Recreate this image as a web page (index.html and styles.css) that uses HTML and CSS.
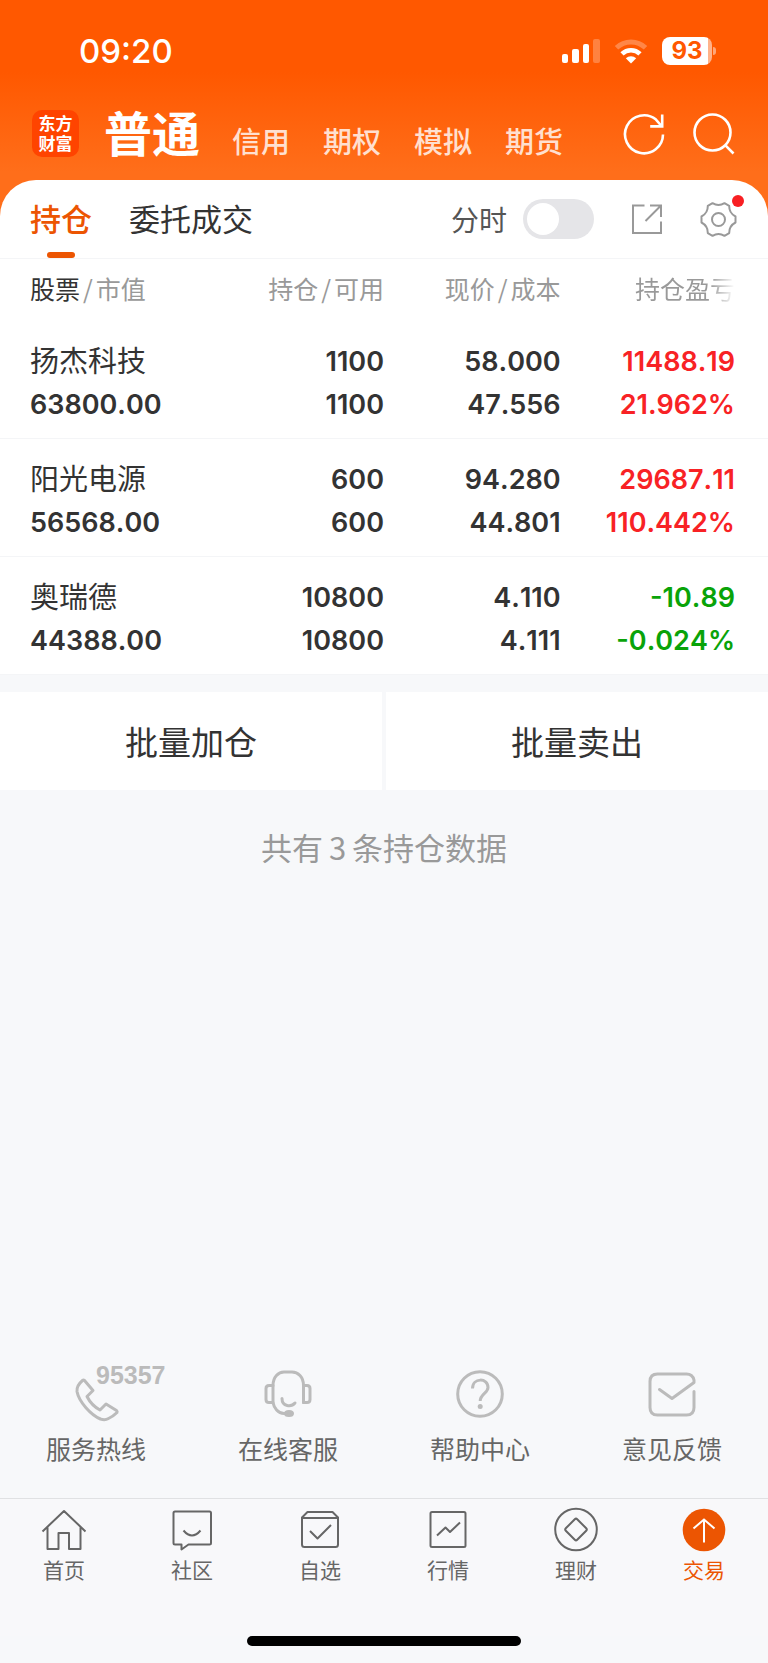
FILE: index.html
```html
<!DOCTYPE html>
<html lang="zh-CN">
<head>
<meta charset="utf-8">
<meta name="viewport" content="width=device-width, initial-scale=1">
<title>交易 - 持仓</title>
<link rel="stylesheet" href="styles.css">
</head>
<body>
<header class="top">
  <div class="status">
    <span class="clock">09:20</span>
    <div class="status-icons">
      <svg class="signal" width="38" height="24" viewBox="0 0 38 24" fill="#fff" aria-hidden="true">
        <rect x="0" y="15" width="6" height="9" rx="2"/>
        <rect x="10" y="10" width="7" height="14" rx="2"/>
        <rect x="21" y="5" width="6" height="19" rx="2"/>
        <rect x="31" y="0" width="7" height="24" rx="2" opacity=".25"/>
      </svg>
      <svg class="wifi" width="34" height="25" viewBox="0 0 34 25" aria-hidden="true">
        <path d="M2.5 8.8a21 21 0 0 1 29 0" fill="none" stroke="#fff" stroke-opacity=".28" stroke-width="5"/>
        <path d="M8 14.8a13 13 0 0 1 18 0" fill="none" stroke="#fff" stroke-width="4.6"/>
        <path d="M17 24.6l-5.2-5.3a7.6 7.6 0 0 1 10.4 0z" fill="#fff"/>
      </svg>
      <div class="battery">93</div>
    </div>
  </div>
  <nav class="accounts">
    <span class="logo">东方<br>财富</span>
    <a class="account current" href="#putong">普通</a>
    <a class="account" href="#xinyong">信用</a>
    <a class="account" href="#qiquan">期权</a>
    <a class="account" href="#moni">模拟</a>
    <a class="account" href="#qihuo">期货</a>
    <div class="actions">
      <button class="icon-btn" type="button" aria-label="刷新">
        <svg width="42" height="42" viewBox="0 0 42 42" fill="none" stroke="#fff" stroke-width="2.6">
          <path d="M40 21.5A19 19 0 1 1 33 6.6L38.5 13"/>
          <path d="M39.200 1.500V13.400H27.200"/>
        </svg>
      </button>
      <button class="icon-btn" type="button" aria-label="搜索">
        <svg width="42" height="42" viewBox="0 0 42 42" fill="none" stroke="#fff" stroke-width="2.600">
          <circle cx="19.500" cy="19.500" r="18"/>
          <path d="M32.200 32.200L40.500 40.500"/>
        </svg>
      </button>
    </div>
  </nav>
</header>

<main class="sheet">
  <div class="tabs">
    <a class="tab active" href="#chicang">持仓</a>
    <a class="tab" href="#weituo">委托成交</a>
    <div class="tools">
      <label class="switch">分时<input type="checkbox" role="switch"></label>
      <button class="icon-btn" type="button" aria-label="分享">
        <svg width="30" height="30" viewBox="0 0 30 30" fill="none" stroke="#999" stroke-width="2">
          <path d="M12.500 1.500H1V29H29V17.500"/>
          <path d="M18 1.500H29V13M28.500 2L13.500 17"/>
        </svg>
      </button>
      <button class="icon-btn gear" type="button" aria-label="设置">
        <svg width="37" height="37" viewBox="0 0 37 37" fill="none" stroke="#999" stroke-width="2" stroke-linejoin="round">
          <path d="M12.500 2.200Q18.500 6 24.500 2.200L29.200 4.900Q29 12 35.500 15.500V21.500Q29 25 29.200 32.100L24.500 34.800Q18.500 31 12.500 34.800L7.800 32.100Q8 25 1.500 21.500V15.500Q8 12 7.800 4.900Z"/>
          <circle cx="18.500" cy="18.500" r="6.500"/>
        </svg>
      </button>
    </div>
  </div>

  <table class="holdings">
    <thead>
      <tr>
        <th scope="col"><b>股票</b><i>/</i>市值</th>
        <th scope="col">持仓<i>/</i>可用</th>
        <th scope="col">现价<i>/</i>成本</th>
        <th scope="col"><span class="fade">持仓盈亏</span></th>
      </tr>
    </thead>
    <tbody>
      <tr>
        <td><span class="name">扬杰科技</span><span>63800.00</span></td>
        <td><span>1100</span><span>1100</span></td>
        <td><span>58.000</span><span>47.556</span></td>
        <td class="up"><span>11488.19</span><span>21.962%</span></td>
      </tr>
      <tr>
        <td><span class="name">阳光电源</span><span>56568.00</span></td>
        <td><span>600</span><span>600</span></td>
        <td><span>94.280</span><span>44.801</span></td>
        <td class="up"><span>29687.11</span><span>110.442%</span></td>
      </tr>
      <tr>
        <td><span class="name">奥瑞德</span><span>44388.00</span></td>
        <td><span>10800</span><span>10800</span></td>
        <td><span>4.110</span><span>4.111</span></td>
        <td class="down"><span>-10.89</span><span>-0.024%</span></td>
      </tr>
    </tbody>
  </table>
</main>

<div class="batch">
  <button type="button">批量加仓</button>
  <button type="button">批量卖出</button>
</div>
<p class="summary">共有<span class="count">3</span>条持仓数据</p>

<section class="services">
  <a class="service" href="#hotline">
    <span class="service-icon">
      <svg width="48" height="48" viewBox="0 0 48 48" fill="none" stroke="#bbb" stroke-width="3" stroke-linejoin="round">
        <path d="M10.500 10.500C7 13.500 4.500 17 5 21.500C7 32 19 45 28.500 49Q33 50.500 36.500 48.500Q41 46.500 45 42.500Q45.500 41.500 44.500 40.500L34 34L28 40Q19.500 35.500 15 26.500L21 20.500L12.500 10.500Q11.500 9.700 10.500 10.500Z"/>
      </svg>
      <span class="hotline">95357</span>
    </span>
    服务热线
  </a>
  <a class="service" href="#online">
    <span class="service-icon">
      <svg width="48" height="48" viewBox="0 0 48 48" fill="none" stroke="#bbb" stroke-width="3" stroke-linecap="round" stroke-linejoin="round">
        <path d="M9 15.500C9 7 14.500 2 20 2H28C34 2 39.500 7 39.500 15.500V32.500M9 15.500V32.500C10 38 14 43.500 20 43.500H23"/>
        <path d="M9 15.500H5Q2 15.500 2 18.500V29.500Q2 32.500 5 32.500H9M39.500 15.500H43Q46 15.500 46 18.500V29.500Q46 32.500 43 32.500H39.500"/>
        <path d="M18 28.500C18 37 27.500 37 31 33"/>
        <ellipse cx="25" cy="43.500" rx="3.500" ry="2" fill="#bbb"/>
      </svg>
    </span>
    在线客服
  </a>
  <a class="service" href="#help">
    <span class="service-icon">
      <svg width="48" height="48" viewBox="0 0 48 48" fill="none" stroke="#bbb" stroke-width="3">
        <circle cx="24" cy="24" r="22.300"/>
        <path d="M16.500 18.500C16.500 7.500 32 7.500 32 17.500C32 23 24.200 24 24.200 31"/>
        <circle cx="24.200" cy="36.500" r="2.500" fill="#bbb" stroke="none"/>
      </svg>
    </span>
    帮助中心
  </a>
  <a class="service" href="#feedback">
    <span class="service-icon">
      <svg width="48" height="48" viewBox="0 0 48 48" fill="none" stroke="#bbb" stroke-width="3" stroke-linecap="round" stroke-linejoin="round">
        <path d="M46 21.500V37.500Q46 45 38.500 45H9.500Q2 45 2 37.500V11.500Q2 4 9.500 4H38.500Q44.500 4 46 10V12.500L24 28.500L11.500 19.500"/>
      </svg>
    </span>
    意见反馈
  </a>
</section>

<nav class="tabbar">
  <a class="item" href="#home">
    <svg width="44" height="44" viewBox="0 0 44 44" fill="none" stroke="#666" stroke-width="2" stroke-linejoin="round">
      <path d="M.5 23.500L22 3L43.500 23.500M5.500 19.500V41H16.500V25H27V41H38.500V19.500"/>
    </svg>首页</a>
  <a class="item" href="#community">
    <svg width="44" height="44" viewBox="0 0 44 44" fill="none" stroke="#666" stroke-width="2" stroke-linejoin="round">
      <path d="M5 3.500H39.500Q41 3.500 41 5V35Q41 36.500 39.500 36.500H18.500L11.500 41.500V36.500H5Q3.500 36.500 3.500 35V5Q3.500 3.500 5 3.500Z"/>
      <path d="M13.500 22.500Q22 32.500 30.500 22.500"/>
    </svg>社区</a>
  <a class="item" href="#watchlist">
    <svg width="44" height="44" viewBox="0 0 44 44" fill="none" stroke="#666" stroke-width="2" stroke-linejoin="round">
      <path d="M4 9.500L9.500 4H34.500L40 9.500V36.500Q40 39 37.500 39H6.500Q4 39 4 36.500ZM4 10H40M12 23L19.500 30.500L33 17"/>
    </svg>自选</a>
  <a class="item" href="#market">
    <svg width="44" height="44" viewBox="0 0 44 44" fill="none" stroke="#666" stroke-width="2" stroke-linejoin="round">
      <rect x="4.500" y="4" width="35" height="35" rx="1.500"/>
      <path d="M11 27.500L19.500 19.500L24 24L34 14.500"/>
    </svg>行情</a>
  <a class="item" href="#wealth">
    <svg width="44" height="44" viewBox="0 0 44 44" fill="none" stroke="#666" stroke-width="2" stroke-linejoin="round">
      <circle cx="22" cy="21.500" r="20.800"/>
      <path d="M20.800 11.200Q22 10 23.200 11.200L32.200 20.300Q33.400 21.500 32.200 22.700L23.200 31.800Q22 33 20.800 31.800L11.800 22.700Q10.600 21.500 11.800 20.300Z"/>
    </svg>理财</a>
  <a class="item selected" href="#trade">
    <svg width="44" height="44" viewBox="0 0 44 44" fill="none" stroke="#fff" stroke-width="2">
      <circle cx="22" cy="22" r="21.300" fill="#ec5502" stroke="none"/>
      <path d="M22 34.500V12M11.500 20.500L22 11.500L32.500 20.500"/>
    </svg>交易</a>
</nav>
<div class="home-indicator"></div>
</body>
</html>
```
FILE: styles.css
```css
* {
  box-sizing: border-box;
}

body {
  margin: 0;
  min-height: 100vh;
  display: flex;
  flex-direction: column;
  background: #f7f8fa;
  color: #333;
  font-family: "Noto Sans CJK SC", sans-serif;
}

a {
  color: inherit;
  text-decoration: none;
}

button {
  border: 0;
  background: none;
  color: inherit;
  font-family: inherit;
}

svg {
  display: block;
  overflow: visible;
}

/* Orange header */
.top {
  padding-bottom: 36px;
  background: linear-gradient(#ff5800 0, #ff5800 72px, #ff6e1a 172px);
  color: #fff;
}

.status {
  height: 102px;
  padding: 0 56px 0 79px;
  display: flex;
  align-items: center;
  justify-content: space-between;
}

.clock {
  font: 500 33px/40px Inter, sans-serif;
}

.status-icons {
  display: flex;
  align-items: center;
}

.wifi {
  margin-left: 14px;
}

.battery {
  position: relative;
  width: 50px;
  height: 28px;
  margin-left: 14px;
  border-radius: 8px;
  background: linear-gradient(90deg, #fff 46px, #ffb28a 46px);
  color: #ff5800;
  font: 700 24px/28px Inter, sans-serif;
  text-align: center;
}

.battery::after {
  content: "";
  position: absolute;
  left: 51px;
  top: 10px;
  width: 3px;
  height: 8px;
  border-radius: 0 3px 3px 0;
  background: #ffa577;
}

.accounts {
  height: 78px;
  padding: 0 33px 23px 32px;
  display: flex;
  align-items: flex-end;
}

.logo {
  width: 47px;
  height: 47px;
  margin-right: 25px;
  padding-top: 3px;
  border-radius: 10px;
  background: #ff4400;
  font-size: 17px;
  font-weight: 700;
  line-height: 20px;
  text-align: center;
}

.account {
  margin-right: 33px;
  color: #ffe0d0;
  font-size: 29px;
  font-weight: 500;
  line-height: 34px;
}

.account.current {
  margin-right: 32px;
  padding-bottom: 2px;
  color: #fff;
  font-size: 48px;
  font-weight: 700;
  line-height: 48px;
}

.actions {
  margin-left: auto;
  padding-bottom: 2px;
  display: flex;
  gap: 28px;
}

.icon-btn {
  padding: 0;
}

/* White sheet */
.sheet {
  margin-top: -36px;
  border-radius: 36px 36px 0 0;
  background: #fff;
}

.tabs {
  height: 79px;
  padding: 0 31px 0 30px;
  display: flex;
  align-items: center;
  gap: 37px;
  border-bottom: 1px solid #f4f5f7;
}

.tab {
  position: relative;
  padding-bottom: 2px;
  font-size: 31px;
  line-height: 76px;
}

.tab.active {
  color: #ec5502;
  font-weight: 500;
}

.tab.active::after {
  content: "";
  position: absolute;
  left: 50%;
  bottom: 0;
  width: 28px;
  height: 6px;
  margin-left: -14px;
  border-radius: 3px;
  background: #ec5502;
}

.tools {
  margin-left: auto;
  display: flex;
  align-items: center;
  gap: 38px;
}

.switch {
  display: flex;
  align-items: center;
  gap: 16px;
  color: #555;
  font-size: 28px;
}

.switch input {
  appearance: none;
  width: 71px;
  height: 40px;
  margin: 0;
  padding: 4px;
  border-radius: 20px;
  background: #e5e5e8;
}

.switch input::before {
  content: "";
  display: block;
  width: 32px;
  height: 32px;
  border-radius: 50%;
  background: #fff;
}

.gear {
  position: relative;
}

.gear::after {
  content: "";
  position: absolute;
  top: -6px;
  right: -7px;
  width: 12px;
  height: 12px;
  border-radius: 50%;
  background: #f81f23;
}

/* Holdings */
.holdings {
  width: 100%;
  table-layout: fixed;
  border-collapse: collapse;
}

.holdings th {
  width: 23%;
  height: 62px;
  padding: 0 0 4px;
  color: #999;
  font-size: 25px;
  font-weight: 400;
  text-align: right;
}

.holdings th:first-child,
.holdings th:last-child {
  width: 27%;
}

.holdings b {
  color: #333;
  font-weight: 400;
}

.holdings i {
  padding: 0 3px;
  font-style: normal;
}

.fade {
  background: linear-gradient(90deg, #999 75%, #fff);
  background-clip: text;
  color: transparent;
}

.holdings td {
  padding: 19px 0 12px;
  border-bottom: 1px solid #f4f5f7;
  font-family: Inter, sans-serif;
  font-size: 27px;
  font-weight: 600;
  font-kerning: none;
  line-height: 43px;
  text-align: right;
}

.holdings td span {
  display: block;
}

.holdings tr > :first-child {
  padding-left: 30px;
  text-align: left;
}

.holdings tr > :last-child {
  padding-right: 33px;
}

.holdings .name {
  padding-bottom: 4px;
  font-family: "Noto Sans CJK SC", sans-serif;
  font-size: 29px;
  font-weight: 400;
  line-height: 39px;
}

.up {
  color: #f82225;
}

.down {
  color: #09a309;
}

.batch {
  margin-top: 17px;
  display: grid;
  grid-template-columns: 1fr 1fr;
  gap: 4px;
}

.batch button {
  height: 98px;
  padding: 0;
  background: #fff;
  font-size: 33px;
}

.summary {
  margin: 34px 0 0;
  color: #999;
  font-size: 31px;
  line-height: 46px;
  text-align: center;
}

.count {
  padding: 0 6px;
}

/* Service links */
.services {
  margin-top: auto;
  padding-bottom: 32px;
  display: grid;
  grid-template-columns: repeat(4, 1fr);
}

.service {
  display: flex;
  flex-direction: column;
  align-items: center;
  gap: 12px;
  color: #666;
  font-size: 25px;
  line-height: 36px;
}

.service-icon {
  position: relative;
}

.hotline {
  position: absolute;
  left: 24px;
  top: -8px;
  color: #bbb;
  font: 700 25px/26px "Liberation Sans", sans-serif;
}

/* Bottom navigation */
.tabbar {
  height: 138px;
  padding-top: 9px;
  display: grid;
  grid-template-columns: repeat(6, 1fr);
  border-top: 1px solid #e0e1e3;
  background: #f8f8fa;
}

.item {
  display: flex;
  flex-direction: column;
  align-items: center;
  gap: 2px;
  color: #666;
  font-size: 21px;
  line-height: 30px;
}

.item.selected {
  color: #ec5502;
}

.home-indicator {
  align-self: center;
  width: 274px;
  height: 10px;
  margin-bottom: 17px;
  border-radius: 5px;
  background: #000;
}
```
